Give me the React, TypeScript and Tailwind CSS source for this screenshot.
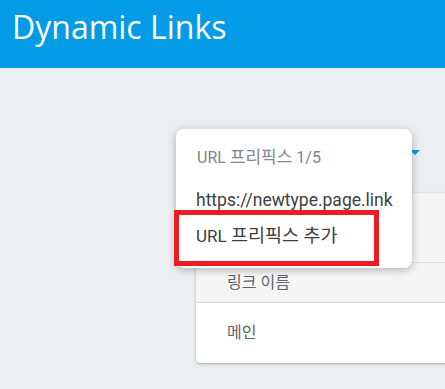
import React from "react";

const kr = { fontFamily: "Roboto, 'Noto Sans CJK KR', sans-serif" };

export default function App() {
  return (
    <div className="relative w-[445px] h-[389px] overflow-hidden bg-[#eceff1]" style={kr}>
      <header className="h-[68px] bg-[#039be5] pl-[12px] pt-[11px]">
        <h1
          className="text-[32px] leading-[31px] text-white"
          style={{ fontFamily: "'Open Sans', sans-serif" }}
        >
          Dynamic Links
        </h1>
      </header>

      <main className="flex flex-col">
        <div className="h-[125px] pl-[410px] pt-[82px]">
          <div className="w-0 h-0 border-l-[5px] border-r-[5px] border-t-[5px] border-l-transparent border-r-transparent border-t-[#039be5]" />
        </div>
        <section className="ml-[196px] w-[300px] rounded-[4px] bg-white shadow-[0_1px_3px_rgba(0,0,0,0.3)] overflow-hidden">
          <div className="h-[70px] bg-[#f5f5f5] border-b border-[#e0e0e0]" />
          <div className="h-[40px] bg-[#f5f5f5] border-b border-[#dadada] flex items-center pl-[31px] text-[16px] text-[#5f6368]">
            링크 이름
          </div>
          <div className="h-[60px] flex items-center pl-[31px] text-[16px] text-[#5f6368]">
            메인
          </div>
        </section>
      </main>

      <div className="absolute left-[176px] top-[129px] w-[236px] h-[139px] rounded-[8px] bg-white shadow-[0_2px_8px_rgba(0,0,0,0.28)] pt-[8px] flex flex-col">
        <div className="h-[41px] flex items-center pl-[21px] text-[16px] text-[#80868b] whitespace-pre">
          URL <span className="text-[17px]">프리픽스</span> 1/5
        </div>
        <div className="h-[44px] flex items-center pl-[20px] text-[17.5px] text-[#3c4043]">https://newtype.page.link</div>
        <div className="h-[30px] flex items-center pl-[20px] text-[17px] text-[#3c4043] whitespace-pre">
          URL <span className="text-[18.5px]">프리픽스 추가</span>
        </div>
      </div>

      <div className="absolute left-[174px] top-[210px] w-[205px] h-[56px] border-[5px] border-[#ed1c24]" />
    </div>
  );
}
